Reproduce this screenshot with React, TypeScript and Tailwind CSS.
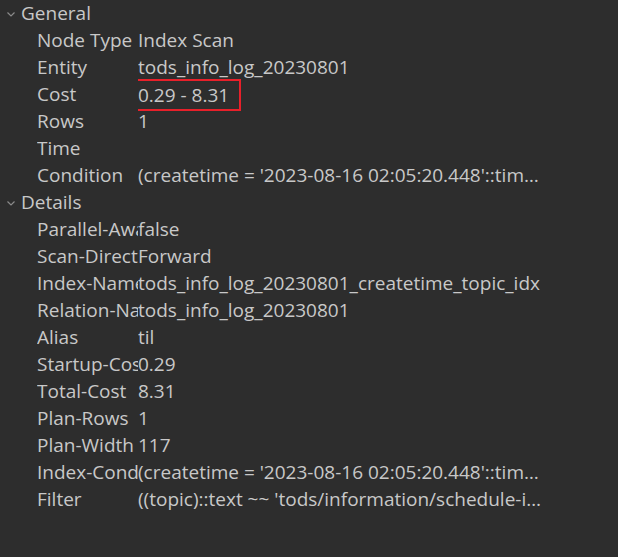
const general: [string, string][] = [
  ["Node Type", "Index Scan"],
  ["Entity", "tods_info_log_20230801"],
  ["Cost", "0.29 - 8.31"],
  ["Rows", "1"],
  ["Time", ""],
  ["Condition", "(createtime = '2023-08-16 02:05:20.448'::timestamp without time zone)"],
];

const details: [string, string][] = [
  ["Parallel-Aware", "false"],
  ["Scan-Direction", "Forward"],
  ["Index-Name", "tods_info_log_20230801_createtime_topic_idx"],
  ["Relation-Name", "tods_info_log_20230801"],
  ["Alias", "til"],
  ["Startup-Cost", "0.29"],
  ["Total-Cost", "8.31"],
  ["Plan-Rows", "1"],
  ["Plan-Width", "117"],
  ["Index-Cond", "(createtime = '2023-08-16 02:05:20.448'::timestamp without time zone)"],
  ["Filter", "((topic)::text ~~ 'tods/information/schedule-info/%'::text)"],
];

function Chevron() {
  return (
    <svg width="10" height="10" viewBox="0 0 10 10" className="shrink-0">
      <path d="M1.5 3.5 L5 7 L8.5 3.5" fill="none" stroke="#8a8a8a" strokeWidth="1.2" />
    </svg>
  );
}

function Row({ label, value }: { label: string; value: string }) {
  const boxed = label === "Cost";
  return (
    <div className="flex h-[27px] items-center pl-[37px]">
      <div className="w-[101px] shrink-0 overflow-hidden whitespace-nowrap">{label}</div>
      <div className="w-[405px] truncate">
        {boxed ? (
          <span className="-ml-[15px] inline-block h-[32px] border-2 border-[#e8202a] pl-[13px] pr-[10px] leading-[28px]">
            {value}
          </span>
        ) : (
          value
        )}
      </div>
    </div>
  );
}

function Group({ title, rows }: { title: string; rows: [string, string][] }) {
  return (
    <div>
      <div className="flex h-[27px] items-center gap-[5px] pl-[6px]">
        <Chevron />
        <span>{title}</span>
      </div>
      {rows.map(([l, v]) => (
        <Row key={l} label={l} value={v} />
      ))}
    </div>
  );
}

export default function App() {
  return (
    <div
      className="h-[557px] w-[618px] overflow-hidden bg-[#2d2d2d] text-[19px] leading-[25px] text-[#c8c8c8]"
      style={{ fontFamily: '"Open Sans", "Noto Sans", sans-serif' }}
    >
      <Group title="General" rows={general} />
      <Group title="Details" rows={details} />
    </div>
  );
}
